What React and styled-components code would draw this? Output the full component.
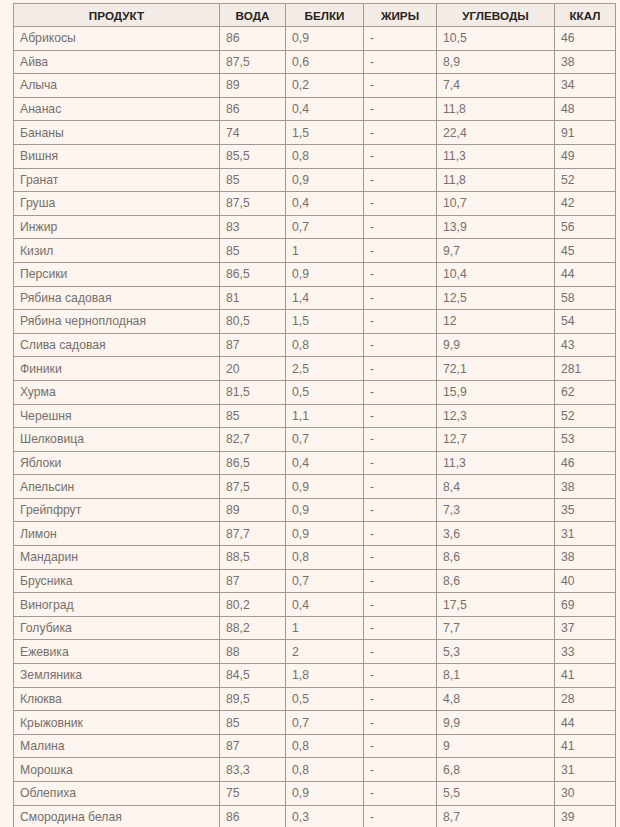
import React from "react";
import styled, { createGlobalStyle } from "styled-components";

const Global = createGlobalStyle`
  html, body { margin: 0; padding: 0; background: #fcf4ee; }
  body { font-family: "Liberation Sans", Arial, sans-serif; }
`;

const Page = styled.div`
  padding: 3px 0 0 13px;
  background: #fcf4ee;
  min-height: 827px;
  box-sizing: border-box;
`;

const Table = styled.table`
  border-collapse: collapse;
  table-layout: fixed;
  width: 602px;
`;

const Th = styled.th`
  height: 22px;
  padding: 0 4px;
  background: #f3ebe5;
  border: 1px solid #a09a95;
  color: #262322;
  font-size: 11.7px;
  font-weight: bold;
  text-transform: uppercase;
  text-align: center;
  vertical-align: middle;
  white-space: nowrap;
`;

const Td = styled.td`
  height: 23.6px;
  padding: 0 0 0 6px;
  border: 1px solid #a09a95;
  color: #76706b;
  font-size: 12.2px;
  text-align: left;
  vertical-align: middle;
  white-space: nowrap;
  overflow: hidden;
  box-sizing: border-box;
`;

const cols = [206, 66, 78, 73, 118, 61];

const rows = [
  ["Абрикосы", "86", "0,9", "-", "10,5", "46"],
  ["Айва", "87,5", "0,6", "-", "8,9", "38"],
  ["Алыча", "89", "0,2", "-", "7,4", "34"],
  ["Ананас", "86", "0,4", "-", "11,8", "48"],
  ["Бананы", "74", "1,5", "-", "22,4", "91"],
  ["Вишня", "85,5", "0,8", "-", "11,3", "49"],
  ["Гранат", "85", "0,9", "-", "11,8", "52"],
  ["Груша", "87,5", "0,4", "-", "10,7", "42"],
  ["Инжир", "83", "0,7", "-", "13,9", "56"],
  ["Кизил", "85", "1", "-", "9,7", "45"],
  ["Персики", "86,5", "0,9", "-", "10,4", "44"],
  ["Рябина садовая", "81", "1,4", "-", "12,5", "58"],
  ["Рябина черноплодная", "80,5", "1,5", "-", "12", "54"],
  ["Слива садовая", "87", "0,8", "-", "9,9", "43"],
  ["Финики", "20", "2,5", "-", "72,1", "281"],
  ["Хурма", "81,5", "0,5", "-", "15,9", "62"],
  ["Черешня", "85", "1,1", "-", "12,3", "52"],
  ["Шелковица", "82,7", "0,7", "-", "12,7", "53"],
  ["Яблоки", "86,5", "0,4", "-", "11,3", "46"],
  ["Апельсин", "87,5", "0,9", "-", "8,4", "38"],
  ["Грейпфрут", "89", "0,9", "-", "7,3", "35"],
  ["Лимон", "87,7", "0,9", "-", "3,6", "31"],
  ["Мандарин", "88,5", "0,8", "-", "8,6", "38"],
  ["Брусника", "87", "0,7", "-", "8,6", "40"],
  ["Виноград", "80,2", "0,4", "-", "17,5", "69"],
  ["Голубика", "88,2", "1", "-", "7,7", "37"],
  ["Ежевика", "88", "2", "-", "5,3", "33"],
  ["Земляника", "84,5", "1,8", "-", "8,1", "41"],
  ["Клюква", "89,5", "0,5", "-", "4,8", "28"],
  ["Крыжовник", "85", "0,7", "-", "9,9", "44"],
  ["Малина", "87", "0,8", "-", "9", "41"],
  ["Морошка", "83,3", "0,8", "-", "6,8", "31"],
  ["Облепиха", "75", "0,9", "-", "5,5", "30"],
  ["Смородина белая", "86", "0,3", "-", "8,7", "39"],
];

const headers = ["Продукт", "Вода", "Белки", "Жиры", "Углеводы", "Ккал"];

export default function App() {
  return (
    <>
      <Global />
      <Page>
        <Table>
          <colgroup>
            {cols.map((w, i) => (
              <col key={i} style={{ width: w }} />
            ))}
          </colgroup>
          <thead>
            <tr>
              {headers.map((h) => (
                <Th key={h}>{h}</Th>
              ))}
            </tr>
          </thead>
          <tbody>
            {rows.map((r) => (
              <tr key={r[0]}>
                {r.map((c, i) => (
                  <Td key={i}>{c}</Td>
                ))}
              </tr>
            ))}
          </tbody>
        </Table>
      </Page>
    </>
  );
}
